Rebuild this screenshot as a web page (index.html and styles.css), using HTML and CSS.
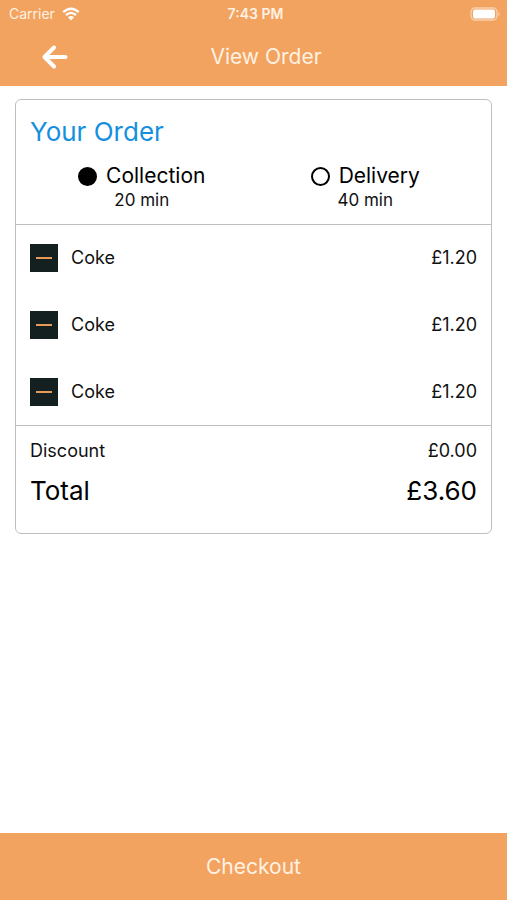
FILE: index.html
```html
<!DOCTYPE html>
<html lang="en">
<head>
<meta charset="utf-8">
<meta name="viewport" content="width=device-width, initial-scale=1">
<title>View Order</title>
<link rel="stylesheet" href="styles.css">
</head>
<body>
<header class="top">
  <div class="status">
    <span class="carrier">Carrier
      <svg class="wifi" viewBox="0 0 18 14" aria-hidden="true">
        <path d="M1.2 5.2Q9-1.8 16.8 5.2M4 8.1Q9 3.7 14 8.1" fill="none" stroke="currentColor" stroke-width="2.3"/>
        <path d="M6 10.3Q9 7.7 12 10.3L9 13.6Z" fill="currentColor"/>
      </svg>
    </span>
    <span class="time">7:43 PM</span>
    <svg class="battery" viewBox="0 0 32 14" aria-hidden="true">
      <rect x="1" y="1" width="26" height="12" rx="4" fill="none" stroke="#fff" stroke-opacity=".5" stroke-width="1.3"/>
      <rect x="3" y="2.5" width="22" height="9" rx="2" fill="#fff"/>
      <path d="M28.5 4.7Q31 7 28.5 9.3Z" fill="#fff" fill-opacity=".5"/>
    </svg>
  </div>
  <nav class="nav">
    <button class="back" type="button" aria-label="Back">
      <svg viewBox="0 0 26 24" aria-hidden="true">
        <path d="M12 2.5L2.5 12L12 21.5M2.5 12H23.5" fill="none" stroke="currentColor" stroke-width="4" stroke-linecap="round" stroke-linejoin="round"/>
      </svg>
    </button>
    <h1 class="title">View Order</h1>
  </nav>
</header>
<main class="content">
  <section class="card">
    <div class="summary">
      <h2 class="heading">Your Order</h2>
      <div class="methods">
        <label class="method">
          <span class="choice"><input class="radio" type="radio" name="method" checked>Collection</span>
          <span class="wait">20 min</span>
        </label>
        <label class="method">
          <span class="choice"><input class="radio" type="radio" name="method">Delivery</span>
          <span class="wait">40 min</span>
        </label>
      </div>
    </div>
    <ul class="items">
      <li class="item"><button class="remove" type="button" aria-label="Remove Coke"></button><span>Coke</span><span class="price">£1.20</span></li>
      <li class="item"><button class="remove" type="button" aria-label="Remove Coke"></button><span>Coke</span><span class="price">£1.20</span></li>
      <li class="item"><button class="remove" type="button" aria-label="Remove Coke"></button><span>Coke</span><span class="price">£1.20</span></li>
    </ul>
    <div class="totals">
      <div class="line"><span>Discount</span><span>£0.00</span></div>
      <div class="line total"><span>Total</span><span>£3.60</span></div>
    </div>
  </section>
</main>
<button class="checkout" type="button">Checkout</button>
</body>
</html>
```
FILE: styles.css
```css
* {
  box-sizing: border-box;
}

body {
  margin: 0;
  min-height: 100vh;
  display: flex;
  flex-direction: column;
  background: #fff;
  color: #111;
  font-family: Inter, "Liberation Sans", sans-serif;
  font-size: 18px;
  line-height: 24px;
}

button {
  border: 0;
  padding: 0;
  font: inherit;
}

.top {
  background: #f2a360;
  color: #fff;
}

.status {
  display: grid;
  grid-template-columns: 1fr auto 1fr;
  align-items: center;
  height: 27px;
  padding: 0 5px 0 9px;
  font-size: 14px;
}

.carrier {
  display: flex;
  align-items: center;
  gap: 7px;
  color: #fff1e2;
}

.wifi {
  width: 18px;
  height: 14px;
  color: #fff;
}

.time {
  font-weight: 600;
  color: #fff1e2;
}

.battery {
  width: 32px;
  height: 14px;
  justify-self: end;
}

.nav {
  display: grid;
  grid-template-columns: 1fr auto 1fr;
  align-items: center;
  height: 59px;
  padding: 0 17px 0 42px;
}

.back {
  width: 26px;
  height: 24px;
  background: none;
  color: #fff;
}

.back svg {
  display: block;
}

.title {
  margin: 0;
  font-size: 21px;
  font-weight: 400;
  color: #fff1e2;
}

.content {
  flex: 1;
  padding: 13px 15px;
}

.card {
  border: 1px solid #bfbfbf;
  border-radius: 6px;
}

.summary {
  padding: 16px 14px 12px;
}

.heading {
  margin: 0 0 16px;
  font-size: 26px;
  line-height: 32px;
  font-weight: 400;
  color: #168fdf;
}

.methods {
  display: grid;
  grid-template-columns: 1fr 1fr;
}

.method {
  display: flex;
  flex-direction: column;
  align-items: center;
}

.choice {
  display: flex;
  align-items: center;
  gap: 9px;
  font-size: 21px;
  color: #000;
}

.radio {
  appearance: none;
  width: 19px;
  height: 19px;
  margin: 0;
  border: 2px solid #000;
  border-radius: 50%;
}

.radio:checked {
  background: #000;
}

.wait {
  font-size: 17px;
}

.items {
  display: flex;
  flex-direction: column;
  gap: 39px;
  margin: 0;
  padding: 19px 14px;
  list-style: none;
  border-top: 1px solid #bfbfbf;
  border-bottom: 1px solid #bfbfbf;
}

.item {
  display: flex;
  align-items: center;
  gap: 13px;
}

.remove {
  display: grid;
  place-items: center;
  width: 28px;
  height: 28px;
  background: #13201f;
}

.remove::before {
  content: "";
  width: 16px;
  height: 2px;
  background: #e59a5b;
}

.price {
  margin-left: auto;
}

.totals {
  display: flex;
  flex-direction: column;
  gap: 12px;
  padding: 13px 14px 26px;
}

.line {
  display: flex;
  justify-content: space-between;
}

.total {
  font-size: 26px;
  line-height: 32px;
  color: #000;
}

.checkout {
  height: 67px;
  background: #f2a360;
  color: #fff1e2;
  font-size: 21px;
}
```
